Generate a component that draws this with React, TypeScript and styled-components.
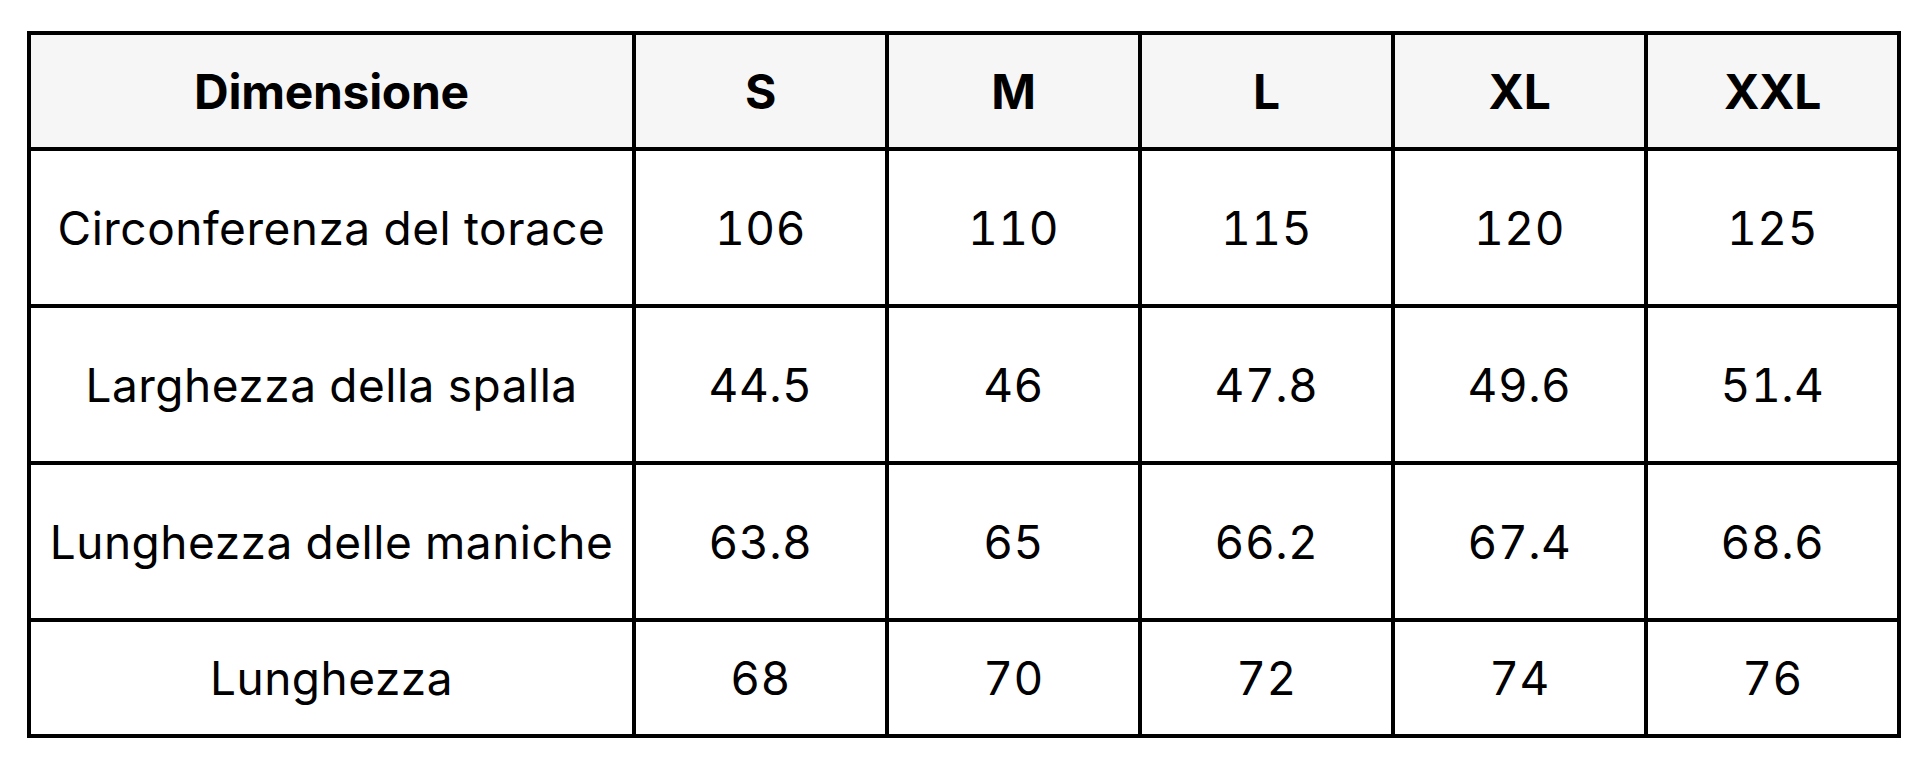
import React from "react";
import styled, { createGlobalStyle } from "styled-components";

const GlobalStyle = createGlobalStyle`
  html, body {
    margin: 0;
    padding: 0;
    background: #ffffff;
  }
  body {
    font-family: Inter, "Liberation Sans", Arial, sans-serif;
    color: #000000;
  }
`;

const Page = styled.div`
  padding: 31px 20px 0 27px;
`;

const Table = styled.div`
  display: grid;
  grid-template-columns: 601px repeat(5, 249px);
  grid-template-rows: 112px repeat(3, 153px) 112px;
  gap: 4px;
  padding: 4px;
  width: max-content;
  background: #000000;
`;

const Cell = styled.div<{ $head?: boolean }>`
  display: flex;
  align-items: center;
  justify-content: center;
  background: ${(p) => (p.$head ? "#f6f6f6" : "#ffffff")};
  font-family: Inter, "Liberation Sans", Arial, sans-serif;
  font-size: ${(p) => (p.$head ? "48px" : "46px")};
  font-weight: ${(p) => (p.$head ? 700 : 400)};
  letter-spacing: ${(p) => (p.$head ? "-0.3px" : "0.5px")};
  font-variant-numeric: tabular-nums;
  line-height: 1;
  padding-top: ${(p) => (p.$head ? "2px" : "0")};
  color: #000000;
  white-space: nowrap;
`;

const headers = ["Dimensione", "S", "M", "L", "XL", "XXL"];

const rows: string[][] = [
  ["Circonferenza del torace", "106", "110", "115", "120", "125"],
  ["Larghezza della spalla", "44.5", "46", "47.8", "49.6", "51.4"],
  ["Lunghezza delle maniche", "63.8", "65", "66.2", "67.4", "68.6"],
  ["Lunghezza", "68", "70", "72", "74", "76"],
];

export default function App() {
  return (
    <>
      <GlobalStyle />
      <Page>
        <Table>
          {headers.map((h) => (
            <Cell key={h} $head>
              {h}
            </Cell>
          ))}
          {rows.map((r) =>
            r.map((v, i) => <Cell key={r[0] + i}>{v}</Cell>)
          )}
        </Table>
      </Page>
    </>
  );
}
